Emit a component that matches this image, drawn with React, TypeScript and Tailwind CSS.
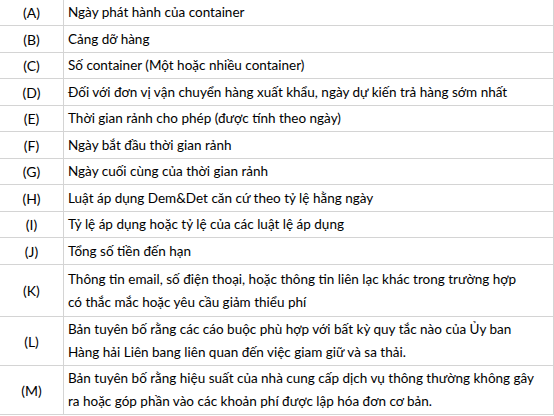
const rows: { label: string; lines: string[]; h: string }[] = [
  { label: "(A)", lines: ["Ngày phát hành của container"], h: "h-[26px]" },
  { label: "(B)", lines: ["Cảng dỡ hàng"], h: "h-[27px]" },
  { label: "(C)", lines: ["Số container (Một hoặc nhiều container)"], h: "h-[26px]" },
  {
    label: "(D)",
    lines: ["Đối với đơn vị vận chuyển hàng xuất khẩu, ngày dự kiến trả hàng sớm nhất"],
    h: "h-[27px]",
  },
  { label: "(E)", lines: ["Thời gian rảnh cho phép (được tính theo ngày)"], h: "h-[26px]" },
  { label: "(F)", lines: ["Ngày bắt đầu thời gian rảnh"], h: "h-[27px]" },
  { label: "(G)", lines: ["Ngày cuối cùng của thời gian rảnh"], h: "h-[26px]" },
  { label: "(H)", lines: ["Luật áp dụng Dem&Det căn cứ theo tỷ lệ hằng ngày"], h: "h-[27px]" },
  { label: "(I)", lines: ["Tỷ lệ áp dụng hoặc tỷ lệ của các luật lệ áp dụng"], h: "h-[26px]" },
  { label: "(J)", lines: ["Tổng số tiền đến hạn"], h: "h-[27px]" },
  {
    label: "(K)",
    lines: [
      "Thông tin email, số điện thoại, hoặc thông tin liên lạc khác trong trường hợp",
      "có thắc mắc hoặc yêu cầu giảm thiểu phí",
    ],
    h: "h-[52px]",
  },
  {
    label: "(L)",
    lines: [
      "Bản tuyên bố rằng các cáo buộc phù hợp với bất kỳ quy tắc nào của Ủy ban",
      "Hàng hải Liên bang liên quan đến việc giam giữ và sa thải.",
    ],
    h: "h-[49px]",
  },
  {
    label: "(M)",
    lines: [
      "Bản tuyên bố rằng hiệu suất của nhà cung cấp dịch vụ thông thường không gây",
      "ra hoặc góp phần vào các khoản phí được lập hóa đơn cơ bản.",
    ],
    h: "h-[49px]",
  },
];

export default function App() {
  return (
    <div className="h-[416px] w-[554px] overflow-hidden bg-white font-['Lato',sans-serif] text-[13.5px] text-black">
      {rows.map((row) => (
        <div key={row.label} className={`flex ${row.h} border-b border-[#d4d4d4]`}>
          <div className="flex w-[64px] shrink-0 items-center justify-center border-r border-[#d4d4d4] text-[14px]">
            {row.label}
          </div>
          <div className="flex flex-1 flex-col justify-center border-r border-[#d4d4d4] pl-[4px] leading-[23px]">
            {row.lines.map((line) => (
              <span key={line} className="whitespace-nowrap">
                {line}
              </span>
            ))}
          </div>
        </div>
      ))}
    </div>
  );
}
